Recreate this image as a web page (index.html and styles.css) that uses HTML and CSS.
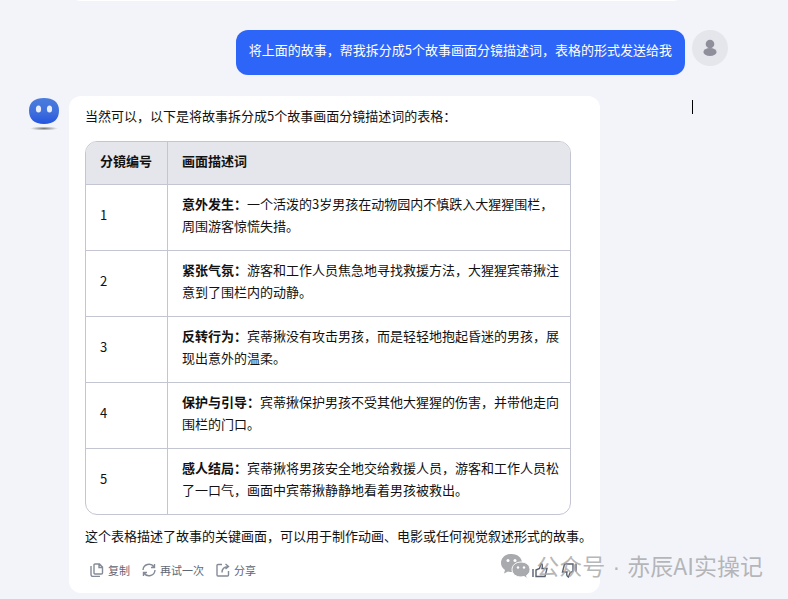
FILE: index.html
```
<!DOCTYPE html>
<html lang="zh-CN">
<head>
  <meta charset="UTF-8">
  <meta name="viewport" content="width=device-width, initial-scale=1.0">
  <title>故事分镜对话</title>
  <link rel="stylesheet" href="styles.css">
</head>
<body>
  <main class="chat">
    <div class="previous"></div>

    <section class="message user">
      <p class="question">将上面的故事，帮我拆分成5个故事画面分镜描述词，表格的形式发送给我</p>
      <svg class="user-avatar" viewBox="0 0 36 36" aria-hidden="true">
        <circle cx="18" cy="18" r="18" fill="#e5e6eb"/>
        <circle cx="18" cy="14" r="4.3" fill="#8e8f9b"/>
        <ellipse cx="18" cy="22" rx="6.6" ry="4" fill="#8e8f9b"/>
      </svg>
    </section>

    <section class="message bot">
      <svg class="bot-avatar" viewBox="0 0 32 36" aria-hidden="true">
        <defs>
          <linearGradient id="face" x1="0" y1="0" x2="0" y2="1">
            <stop offset="0" stop-color="#4a7cdc"/>
            <stop offset="0.55" stop-color="#3f6fdc"/>
            <stop offset="1" stop-color="#2454e0"/>
          </linearGradient>
          <radialGradient id="shadow">
            <stop offset="0" stop-color="#777"/>
            <stop offset="1" stop-color="#777" stop-opacity="0"/>
          </radialGradient>
        </defs>
        <path d="M16 2C25 2 31 6 31 14.500C31 23 26 28 16 28C6 28 1 23 1 14.500C1 6 7 2 16 2Z" fill="url(#face)"/>
        <ellipse cx="10.500" cy="13" rx="2.600" ry="3.500" fill="#e8edfb"/>
        <ellipse cx="21.500" cy="13" rx="2.600" ry="3.500" fill="#e8edfb"/>
        <ellipse cx="16" cy="32.500" rx="14" ry="2" fill="url(#shadow)"/>
      </svg>
      <div class="answer">
        <p>当然可以，以下是将故事拆分成5个故事画面分镜描述词的表格：</p>
        <table class="shots">
          <thead>
            <tr><th scope="col">分镜编号</th><th scope="col">画面描述词</th></tr>
          </thead>
          <tbody>
            <tr><td>1</td><td><strong>意外发生：</strong>一个活泼的3岁男孩在动物园内不慎跌入大猩猩围栏，周围游客惊慌失措。</td></tr>
            <tr><td>2</td><td><strong>紧张气氛：</strong>游客和工作人员焦急地寻找救援方法，大猩猩宾蒂揪注意到了围栏内的动静。</td></tr>
            <tr><td>3</td><td><strong>反转行为：</strong>宾蒂揪没有攻击男孩，而是轻轻地抱起昏迷的男孩，展现出意外的温柔。</td></tr>
            <tr><td>4</td><td><strong>保护与引导：</strong>宾蒂揪保护男孩不受其他大猩猩的伤害，并带他走向围栏的门口。</td></tr>
            <tr><td>5</td><td><strong>感人结局：</strong>宾蒂揪将男孩安全地交给救援人员，游客和工作人员松了一口气，画面中宾蒂揪静静地看着男孩被救出。</td></tr>
          </tbody>
        </table>
        <p class="summary">这个表格描述了故事的关键画面，可以用于制作动画、电影或任何视觉叙述形式的故事。</p>
        <div class="actions">
          <button type="button">
            <svg viewBox="0 0 14 14"><path d="M5 1H9.500L12.500 4V10Q12.500 11 11.500 11H5Q4 11 4 10V2Q4 1 5 1ZM9 1V4.500H12.500M1 3V11.500Q1 13.500 3 13.500H10"/></svg>
            复制
          </button>
          <button type="button">
            <svg viewBox="0 0 14 14"><path d="M1 7A6 6 0 0 1 12 4M12.500 1V4.500H9M13 7A6 6 0 0 1 2 10M1.500 13V9.500H5"/></svg>
            再试一次
          </button>
          <button type="button">
            <svg viewBox="0 0 14 14"><path d="M6 1.500H2Q1 1.500 1 2.500V12Q1 13 2 13H11.500Q12.500 13 12.500 12V8M6 9.500Q6 4 12 3.500M9.500 1L12.500 3.500L9.500 6"/></svg>
            分享
          </button>
          <span class="votes">
            <button type="button" aria-label="赞">
              <svg viewBox="0 0 16 16"><path d="M1 7V15M4 8L7.500 6.500L9 1.500Q11 2 10 6.500H15L13 14.500H4Z"/></svg>
            </button>
            <button type="button" aria-label="踩">
              <svg viewBox="0 0 16 16"><path d="M15 9.500V1.500M12 9L9 11L7.500 15Q5 14 6 10H1.500L3.500 2H12Z"/></svg>
            </button>
          </span>
        </div>
      </div>
    </section>

    <div class="caret"></div>
    <div class="watermark">
      <svg viewBox="0 0 32 26" aria-hidden="true">
        <path d="M11.500 1C5 1 1 5 1 10C1 13 2.500 15 5 17L4 20.500L8 18.500Q10 19 12 19C18 19 22 15 22 10C22 5 18 1 11.500 1Z" fill="#a9aaad"/>
        <path d="M21 9C15.500 9 12 12.500 12 16.500C12 21 16 24 21 24L24 23.500L27.500 25.500L26.500 22.500C29 21 30 19 30 16.500C30 12.500 26.500 9 21 9Z" fill="#a9aaad" stroke="#fff"/>
        <g fill="#fff"><circle cx="8" cy="7.500" r="1.500"/><circle cx="15" cy="7.500" r="1.500"/><circle cx="18" cy="14.500" r="1.200"/><circle cx="24" cy="14.500" r="1.200"/></g>
      </svg>
      <span>公众号 <span class="dot">·</span> 赤辰AI实操记</span>
    </div>
  </main>
</body>
</html>
```
FILE: styles.css
```
* { box-sizing: border-box; }
body { margin: 0; background: #f3f4fa; color: #111; font: 13px/22px "Noto Sans CJK SC", sans-serif; }
p { margin: 0; }
svg { display: block; flex: none; fill: none; }
.chat { position: relative; min-height: 100vh; padding-bottom: 6px; overflow: hidden; }
.previous { height: 24px; margin: -23px 103px 29px 69px; background: #fff; border-radius: 12px; }
.message { display: flex; }
.user { justify-content: flex-end; gap: 7px; padding-right: 60px; }
.question { padding: 9px 13px 14px; background: #2d65f8; color: #fff; border-radius: 12px; }
.user-avatar { width: 36px; height: 36px; }
.bot { gap: 9px; margin-top: 21px; padding: 0 188px 0 28px; }
.bot-avatar { width: 32px; height: 36px; }
.answer { flex: 1; padding: 9px 8px 12px 16px; background: #fff; border-radius: 12px; }
.shots { width: calc(100% - 21px); margin: 14px 0 10px; border: 1px solid #c4c5d2; border-radius: 12px; border-spacing: 0; overflow: hidden; table-layout: fixed; }
.shots th, .shots td { padding: 8px 8px 13px 14px; text-align: left; border-bottom: 1px solid #c4c5d2; }
.shots th { padding-bottom: 12px; background: #e5e6eb; }
.shots th:first-child { width: 82px; }
.shots th:first-child, .shots td:first-child { border-right: 1px solid #c4c5d2; }
.shots tbody tr:last-child td { border-bottom: 0; }
.summary { white-space: nowrap; }
.actions { display: flex; align-items: center; gap: 12px; margin-top: 12px; padding: 0 15px 0 5px; }
.actions button { display: flex; align-items: center; gap: 4px; padding: 0; border: 0; background: none; color: #5f6775; font: inherit; font-size: 11px; cursor: pointer; }
.actions svg { width: 14px; height: 14px; stroke: #858b96; stroke-width: 1.4; }
.actions .votes { display: flex; gap: 13px; margin-left: auto; }
.actions .votes svg { width: 16px; height: 16px; stroke: #596170; }
.caret { position: absolute; top: 100px; left: 692px; width: 1px; height: 14px; background: #000; }
.watermark { position: absolute; right: 25px; bottom: 15px; display: flex; align-items: center; gap: 4px; color: #a9aaadd9; font-size: 23px; line-height: 34px; white-space: nowrap; pointer-events: none; }
.watermark svg { width: 32px; height: 26px; }
.dot { margin: 0 2px; font-family: "Liberation Sans", sans-serif; }
```
